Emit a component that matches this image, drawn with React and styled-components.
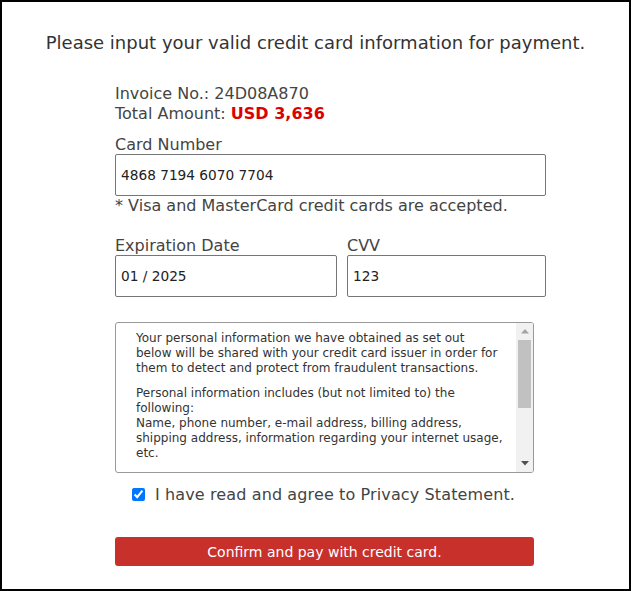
import React, { useState } from "react";
import styled, { createGlobalStyle } from "styled-components";

const GlobalStyle = createGlobalStyle`
  html, body {
    margin: 0;
    padding: 0;
    background: #fff;
  }
  body {
    font-family: "DejaVu Sans", sans-serif;
    color: #333;
  }
  * { box-sizing: border-box; }
`;

const Page = styled.div`
  width: 631px;
  height: 591px;
  border: 2px solid #000;
  background: #fff;
  display: flex;
  flex-direction: column;
  align-items: center;
`;

const Title = styled.h1`
  margin: 30px 0 0;
  font-size: 18px;
  font-weight: normal;
  line-height: 22px;
  color: #333;
`;

const Form = styled.form`
  width: 431px;
  margin: 30px 0 0 30px;
  display: flex;
  flex-direction: column;
`;

const Info = styled.div`
  font-size: 16px;
  line-height: 20px;
  color: #444;
`;

const Amount = styled.span`
  color: #dd0000;
  font-weight: bold;
`;

const Label = styled.label`
  display: block;
  font-size: 16px;
  line-height: 18px;
  color: #444;
`;

const Field = styled.div`
  display: flex;
  flex-direction: column;
  width: ${p => p.$width || "100%"};
  margin-top: ${p => p.$top || 0}px;
`;

const Input = styled.input`
  width: 100%;
  height: 42px;
  border: 1px solid #767676;
  border-radius: 2px;
  padding: 0 5px;
  font-family: inherit;
  font-size: 13.7px;
  color: #222;
  outline: none;
`;

const Note = styled.p`
  margin: 0;
  font-size: 16px;
  line-height: 20px;
  color: #444;
`;

const Row = styled.div`
  display: flex;
  gap: 10px;
  margin-top: 21px;
`;

const Privacy = styled.div`
  width: 419px;
  height: 151px;
  margin-top: 25px;
  border: 1px solid #999;
  border-radius: 3px;
  display: flex;
  overflow: hidden;
`;

const PrivacyText = styled.div`
  flex: 1;
  overflow: hidden;
  padding: 8px 13px 6px 20px;
  font-size: 12px;
  line-height: 15px;
  color: #333;

  p {
    margin: 0 0 10px;
  }
`;

const ScrollBar = styled.div`
  width: 17px;
  flex-shrink: 0;
  background: #f1f1f1;
  display: flex;
  flex-direction: column;
`;

const ScrollButton = styled.div`
  height: 17px;
  display: flex;
  align-items: center;
  justify-content: center;

  svg {
    display: block;
  }
`;

const ScrollTrack = styled.div`
  flex: 1;
  padding: 0 2px;
`;

const ScrollThumb = styled.div`
  height: 68px;
  background: #c1c1c1;
`;

const Agree = styled.label`
  display: flex;
  align-items: center;
  gap: 10px;
  margin: 12px 0 0 17px;
  font-size: 16px;
  letter-spacing: 0.12px;
  color: #444;

  input {
    width: 13px;
    height: 13px;
    margin: 0;
    accent-color: #0075ff;
  }
`;

const Submit = styled.button`
  width: 419px;
  height: 29px;
  margin-top: 33px;
  border: none;
  border-radius: 3px;
  background: #c8302c;
  color: #fff;
  font-family: inherit;
  font-size: 14px;
  cursor: pointer;
`;

const Arrow = ({ down, color }) => (
  <svg width="8" height="5" viewBox="0 0 8 5">
    <path d={down ? "M0 0h8L4 4.5z" : "M0 4.5h8L4 0z"} fill={color} />
  </svg>
);

export default function App() {
  const [card, setCard] = useState("4868 7194 6070 7704");
  const [expiry, setExpiry] = useState("01 / 2025");
  const [cvv, setCvv] = useState("123");
  const [agreed, setAgreed] = useState(true);

  return (
    <>
      <GlobalStyle />
      <Page>
        <Title>Please input your valid credit card information for payment.</Title>
        <Form onSubmit={e => e.preventDefault()}>
          <Info>Invoice No.: 24D08A870</Info>
          <Info>
            Total Amount: <Amount>USD 3,636</Amount>
          </Info>

          <Field $top={12}>
            <Label htmlFor="card">Card Number</Label>
            <Input id="card" value={card} onChange={e => setCard(e.target.value)} />
          </Field>
          <Note>* Visa and MasterCard credit cards are accepted.</Note>

          <Row>
            <Field $width="222px">
              <Label htmlFor="expiry">Expiration Date</Label>
              <Input id="expiry" value={expiry} onChange={e => setExpiry(e.target.value)} />
            </Field>
            <Field $width="199px">
              <Label htmlFor="cvv">CVV</Label>
              <Input id="cvv" value={cvv} onChange={e => setCvv(e.target.value)} />
            </Field>
          </Row>

          <Privacy>
            <PrivacyText>
              <p>
                Your personal information we have obtained as set out below will be shared
                with your credit card issuer in order for them to detect and protect from
                fraudulent transactions.
              </p>
              <p>
                Personal information includes (but not limited to) the following:
                <br />
                Name, phone number, e-mail address, billing address, shipping address,
                information regarding your internet usage, etc.
              </p>
              <p>
                The credit card issuer may use this information only for the purpose of
                detecting fraudulent transactions, and will handle it in accordance with
                its own privacy policy.
              </p>
              <p>
                If your credit card issuer is located outside your country, your personal
                information may be transferred abroad for this purpose.
              </p>
            </PrivacyText>
            <ScrollBar>
              <ScrollButton>
                <Arrow color="#a3a3a3" />
              </ScrollButton>
              <ScrollTrack>
                <ScrollThumb />
              </ScrollTrack>
              <ScrollButton>
                <Arrow down color="#505050" />
              </ScrollButton>
            </ScrollBar>
          </Privacy>

          <Agree>
            <input type="checkbox" checked={agreed} onChange={e => setAgreed(e.target.checked)} />
            I have read and agree to Privacy Statement.
          </Agree>

          <Submit type="submit">Confirm and pay with credit card.</Submit>
        </Form>
      </Page>
    </>
  );
}
